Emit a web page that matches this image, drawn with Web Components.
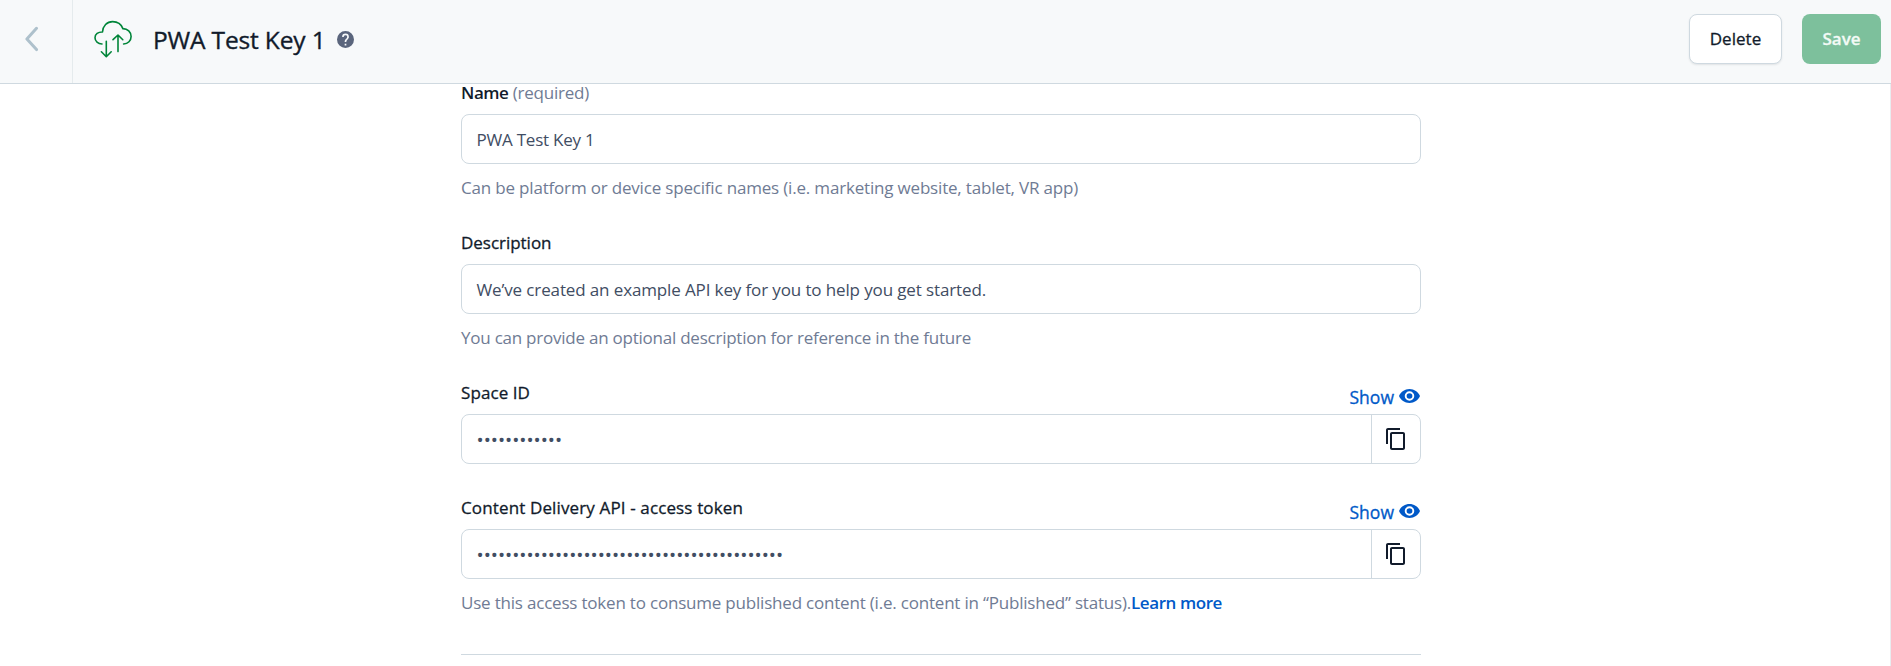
<!DOCTYPE html>
<html lang="en">
<head>
<meta charset="utf-8">
<title>PWA Test Key 1</title>
<style>
html,body{margin:0;height:100%;overflow:hidden;background:#fff}
body{font:400 17px/18px "Open Sans","Noto Sans",sans-serif;color:#111b2b}
</style>
</head>
<body>
<key-page></key-page>
<script>
const define = (name, html, ready) => {
  const tpl = document.createElement('template');
  tpl.innerHTML = html;
  customElements.define(name, class extends HTMLElement {
    connectedCallback() {
      if (this.shadowRoot) return;
      this.attachShadow({ mode: 'open' }).append(tpl.content.cloneNode(true));
      if (ready) ready(this, this.shadowRoot);
    }
  });
};

// A line of text whose tracking is adjusted to a given width.
define('fit-text', `<style>:host{display:inline-block;white-space:pre}</style><slot></slot>`, (el) => {
  const target = +el.getAttribute('w');
  const width = el.getBoundingClientRect().width;
  el.style.letterSpacing = (target - width) / el.textContent.length + 'px';
});

define('icon-back', `<style>:host{display:block;width:14px;height:26px}svg{display:block}</style>
<svg width="14" height="26" viewBox="0 0 14 26" fill="none" stroke="#aec1cc" stroke-width="3" stroke-linecap="round" stroke-linejoin="round"><path d="M11.5 2.3 1.9 13 11.5 23.6"/></svg>`);

define('icon-cloud', `<style>:host{display:block;width:38px;height:38px}svg{display:block}</style>
<svg width="38" height="38" viewBox="0 0 38 38" fill="none" stroke="#008539" stroke-width="1.6" stroke-linecap="round" stroke-linejoin="round">
<path d="M8 24C4 24 1 21.300 1 17.800C1 14.200 4.200 11.800 8.500 12C8.800 6 13 1.600 18.600 1.600C23.600 1.600 27.300 4.300 28.900 8.600C33.600 8.700 37.100 12 37.100 16.500C37.100 20.700 34 23.800 29.600 24"/>
<path d="M12.300 21.200V36.400M7.400 31.800 12.300 36.700 17.200 31.800M24 31.600V15.400M19 19.700 24 15 28.800 19.700"/></svg>`);

define('icon-help', `<style>:host{display:block;width:17px;height:17px}svg{display:block}</style>
<svg width="17" height="17" viewBox="2 2 20 20"><path fill="#5a657c" d="M12 2a10 10 0 1 0 0 20 10 10 0 0 0 0-20zm1 17h-2v-2h2v2zm2.070-7.750-.9.920C13.450 12.900 13 13.500 13 15h-2v-.500c0-1.100.450-2.100 1.170-2.830l1.240-1.260A2 2 0 1 0 10 9H8a4 4 0 1 1 8 0c0 .880-.360 1.680-.930 2.250z" stroke="none"/></svg>`);

define('icon-eye', `<style>:host{display:block;width:21px;height:14px}svg{display:block}</style>
<svg width="21" height="14" viewBox="1 4.500 22 15" preserveAspectRatio="none"><path fill="#0059c8" d="M12 4.500C7 4.500 2.730 7.610 1 12c1.730 4.390 6 7.500 11 7.500s9.270-3.110 11-7.500c-1.730-4.390-6-7.500-11-7.500zM12 17a5 5 0 1 1 0-10 5 5 0 0 1 0 10zm0-8a3 3 0 1 0 0 6 3 3 0 0 0 0-6z"/></svg>`);

define('icon-copy', `<style>:host{display:block;width:19px;height:22px}svg{display:block}</style>
<svg width="19" height="22" viewBox="2 1 19 22" preserveAspectRatio="none"><path fill="#111b2b" d="M16 1H4c-1.100 0-2 .900-2 2v14h2V3h12V1zm3 4H8c-1.100 0-2 .900-2 2v14c0 1.100.900 2 2 2h11c1.100 0 2-.900 2-2V7c0-1.100-.900-2-2-2zm0 16H8V7h11v14z"/></svg>`);

define('ui-button', `<style>
:host{display:flex;box-sizing:border-box;height:50px;align-items:center;justify-content:center;border-radius:8px;-webkit-text-stroke:.3px}
:host([kind=secondary]){width:93px;background:#fff;border:1px solid #cfd9e0;box-shadow:0 1px 2px rgba(25,37,50,.1)}
:host([kind=primary]){width:79px;background:#7dc09c;color:#f3faf6;font-weight:600}
</style><slot></slot>`);

define('page-header', `<style>
:host{display:flex;box-sizing:border-box;height:84px;background:#f7f9fa;border-bottom:1px solid #cfd9e0}
.back{box-sizing:border-box;width:73px;border-right:1px solid #e5ebed;padding:26px 0 0 25px}
.logo{padding:20px 0 0 21px;width:59px;box-sizing:content-box}
.title{font-size:24.500px;line-height:30px;-webkit-text-stroke:.35px;padding-top:25px}
.help{padding:31px 0 0 11px}
.actions{margin-left:auto;display:flex;gap:20px;padding:14px 10px 0 0}
</style>
<div class="back"><icon-back></icon-back></div>
<div class="logo"><icon-cloud></icon-cloud></div>
<div class="title"><fit-text w="172.500">PWA Test Key 1</fit-text></div>
<div class="help"><icon-help></icon-help></div>
<div class="actions"><ui-button kind="secondary"><fit-text w="51.500">Delete</fit-text></ui-button><ui-button kind="primary"><fit-text w="38">Save</fit-text></ui-button></div>`);

define('show-link', `<style>
:host{display:flex;color:#0059c8;gap:5px;padding-top:4px;-webkit-text-stroke:.3px}
fit-text{font-size:17.500px}
icon-eye{margin:1px 1px 0 0}
</style><fit-text w="44.500">Show</fit-text><icon-eye></icon-eye>`);

define('form-field', `<style>
:host{display:block;height:150px}
:host([short]){height:115px}
.label{display:flex;justify-content:space-between;height:30px}
.label ::slotted(fit-text){-webkit-text-stroke:.3px}
.box{display:flex;box-sizing:border-box;height:50px;border:1px solid #cfd9e0;border-radius:8px;color:#414d63}
.value{flex:1;padding:16px 0 0 14.500px}
.help{color:#6f7b94;padding-top:15px}
</style>
<div class="label"><div><slot name="label"></slot></div><slot name="action"></slot></div>
<div class="box"><div class="value"><slot></slot></div><slot name="copy"></slot></div>
<div class="help"><slot name="help"></slot></div>`);

define('copy-button', `<style>
:host{display:block;box-sizing:border-box;width:49px;border-left:1px solid #cfd9e0;padding:13px 0 0 14px}
</style><icon-copy></icon-copy>`);

define('key-form', `<style>
:host{display:block;width:960px;margin:0 0 0 461px}
.muted{color:#6f7b94}
.strong{font-weight:600}
.link{color:#0059c8;font-weight:600}
.dots{font-size:19px}
.rule{height:1px;background:#cfd9e0;margin-top:5px}
</style>
<form-field>
<div slot="label"><fit-text class="strong" w="47.500">Name</fit-text><fit-text class="muted" w="80.500"> (required)</fit-text></div>
<fit-text w="118">PWA Test Key 1</fit-text>
<fit-text slot="help" w="617">Can be platform or device specific names (i.e. marketing website, tablet, VR app)</fit-text>
</form-field>
<form-field>
<fit-text slot="label" w="90.500">Description</fit-text>
<fit-text w="509.500">We’ve created an example API key for you to help you get started.</fit-text>
<fit-text slot="help" w="510">You can provide an optional description for reference in the future</fit-text>
</form-field>
<form-field short>
<fit-text slot="label" w="69">Space ID</fit-text>
<show-link slot="action"></show-link>
<fit-text class="dots" w="85.600">••••••••••••</fit-text>
<copy-button slot="copy"></copy-button>
</form-field>
<form-field>
<fit-text slot="label" w="282">Content Delivery API - access token</fit-text>
<show-link slot="action"></show-link>
<fit-text class="dots" w="306.600">•••••••••••••••••••••••••••••••••••••••••••</fit-text>
<copy-button slot="copy"></copy-button>
<div slot="help"><fit-text w="670">Use this access token to consume published content (i.e. content in “Published” status).</fit-text><fit-text class="link" w="91">Learn more</fit-text></div>
</form-field>
<div class="rule"></div>`);

define('key-page', `<style>
:host{display:flex;flex-direction:column;height:100vh}
main{flex:1;min-height:0;border-right:1px solid #e9edf0}
</style><page-header></page-header><main><key-form></key-form></main>`);
</script>
</body>
</html>
